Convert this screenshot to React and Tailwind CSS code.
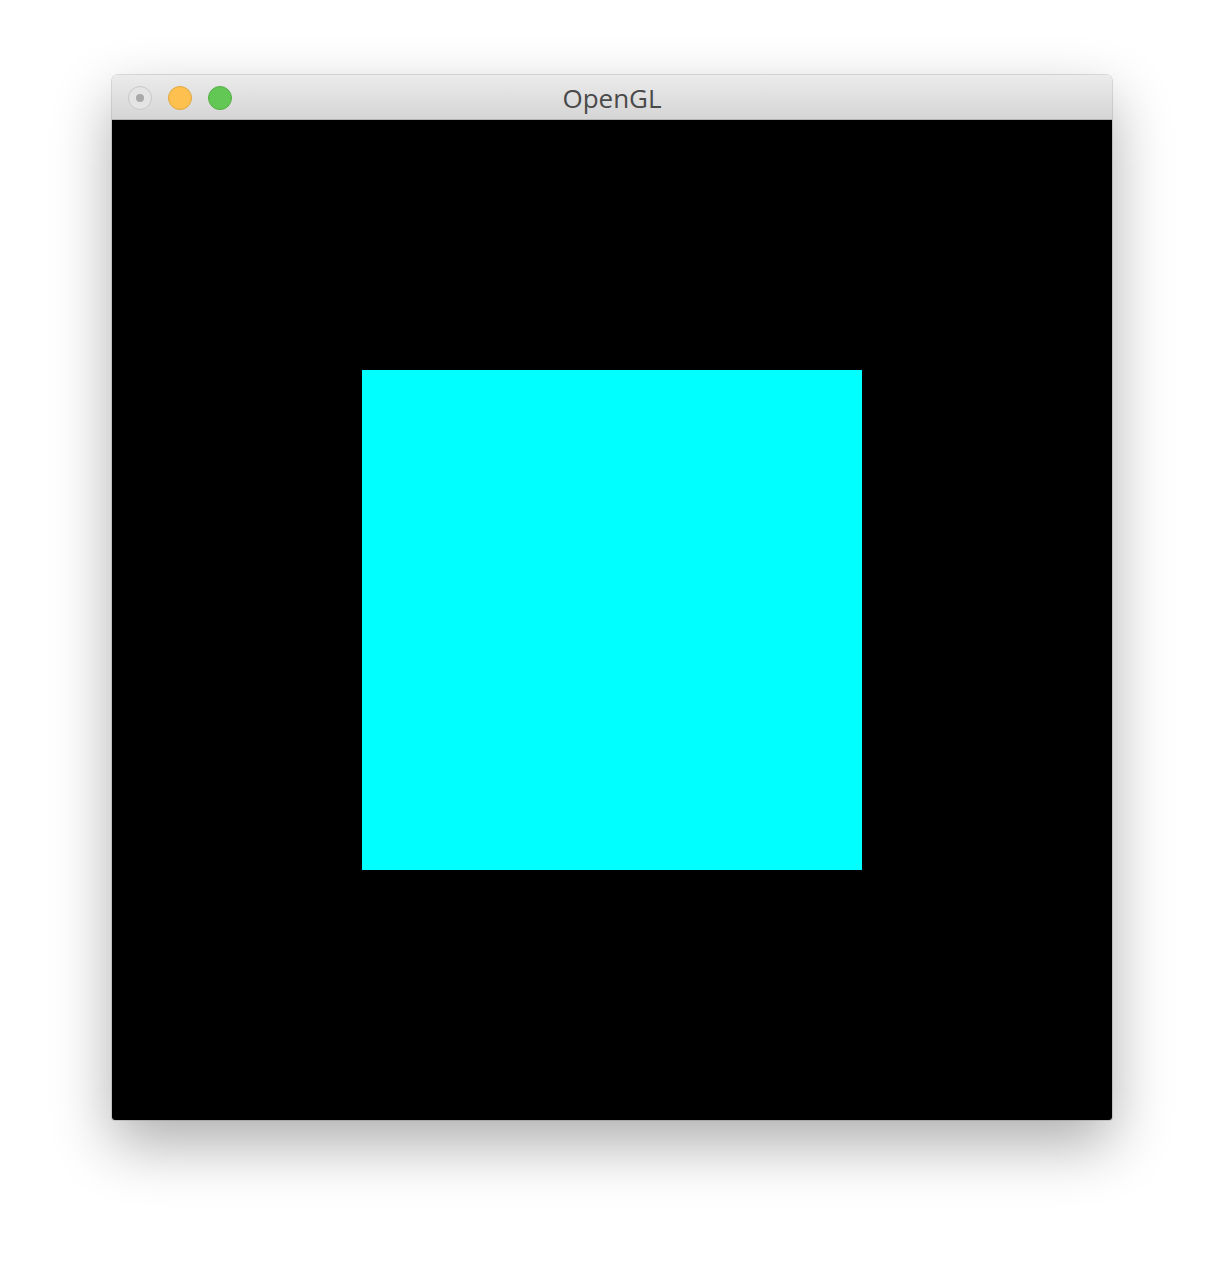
import React from "react";

const TrafficLights = () => (
    <div className="flex items-center gap-4 pl-4 pt-[1px]">
        <div className="w-6 h-6 rounded-full border border-[#c8c8c8] bg-[#e4e4e4] flex items-center justify-center">
            <div className="w-2 h-2 rounded-full bg-[#a9a9a9]" />
        </div>
        <div className="w-6 h-6 rounded-full border border-[#e1a73e] bg-[#fec04f]" />
        <div className="w-6 h-6 rounded-full border border-[#52b043] bg-[#62c755]" />
    </div>
);

export default function App() {
    return (
        <div className="w-[1224px] h-[1268px] bg-white flex justify-center pt-[75px]">
            <div className="w-[1000px] h-[1045px] flex flex-col rounded-t-[6px] rounded-b-[3px] overflow-hidden shadow-[0_24px_60px_rgba(0,0,0,0.32),0_0_0_1px_rgba(0,0,0,0.12)]">
                <div className="relative h-[45px] flex items-center bg-gradient-to-b from-[#ebebeb] to-[#d5d5d5] border-b border-[#b4b4b4]">
                    <TrafficLights />
                    <div
                        className="absolute inset-0 pt-[3px] flex items-center justify-center text-[26px] text-[#4a4a4a]"
                        style={{ fontFamily: '"Open Sans", "Liberation Sans", sans-serif' }}
                    >
                        OpenGL
                    </div>
                </div>
                <div className="flex-1 bg-black flex items-center justify-center">
                    <div className="w-[500px] h-[500px] bg-[#00ffff]" />
                </div>
            </div>
        </div>
    );
}
